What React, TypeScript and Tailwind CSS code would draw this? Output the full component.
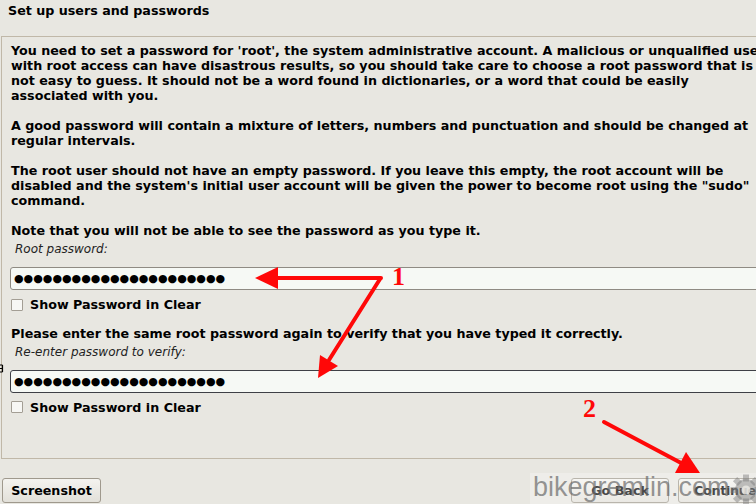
import React from "react";

const DOTS = "●".repeat(22);

function Checkbox({ label }: { label: string }) {
  return (
    <div className="flex items-center h-[15px] gap-[7px]">
      <div className="w-[12px] h-[12px] border border-[#a39e94] bg-[#f7f7f4] rounded-[1px]" />
      <span className="font-bold text-[12.7px] leading-[15px] whitespace-nowrap">{label}</span>
    </div>
  );
}

function PwInput({ focused }: { focused?: boolean }) {
  return (
    <div
      className={
        "-ml-[1px] w-[790px] h-[23px] rounded-l-[3px] bg-[#f6f9f5] flex items-center pl-[3px] border " +
        (focused ? "border-[#3e4046]" : "border-[#8f8b83]")
      }
    >
      <span className="text-[11px] leading-none text-black font-['DejaVu_Sans',sans-serif]">{DOTS}</span>
    </div>
  );
}

function Btn({ label, w }: { label: string; w: string }) {
  return (
    <div
      className={
        "h-[25px] rounded-[3px] border border-[#9f998d] bg-gradient-to-b from-[#f4f3ef] to-[#e2e0d9] flex items-center justify-center font-bold text-[12.7px] " +
        w
      }
    >
      {label}
    </div>
  );
}

export default function App() {
  return (
    <div className="w-[756px] h-[504px] overflow-hidden relative bg-[#e8e7e1] text-black font-['DejaVu_Sans','Noto_Sans',sans-serif]">
      <div className="h-[36px] pl-[8px] pt-[3px] font-bold text-[12.7px] leading-[15px] whitespace-nowrap">
        Set up users and passwords
      </div>

      <div className="ml-[1px] w-[800px] h-[423px] border border-[#c0b8a8] pl-[9px] pt-[6px]">
        <div className="font-bold text-[12.7px] leading-[15px] whitespace-nowrap">
          <p className="mb-[15px]">
            You need to set a password for 'root', the system administrative account. A malicious or unqualified user
            <br />
            with root access can have disastrous results, so you should take care to choose a root password that is
            <br />
            not easy to guess. It should not be a word found in dictionaries, or a word that could be easily
            <br />
            associated with you.
          </p>
          <p className="mb-[15px]">
            A good password will contain a mixture of letters, numbers and punctuation and should be changed at
            <br />
            regular intervals.
          </p>
          <p className="mb-[15px]">
            The root user should not have an empty password. If you leave this empty, the root account will be
            <br />
            disabled and the system's initial user account will be given the power to become root using the "sudo"
            <br />
            command.
          </p>
          <p>Note that you will not be able to see the password as you type it.</p>
        </div>

        <div className="mt-[4px] pl-[4px] italic text-[12px] leading-[15px] text-[#222]">Root password:</div>
        <div className="mt-[10px]">
          <PwInput />
        </div>
        <div className="mt-[7px]">
          <Checkbox label="Show Password in Clear" />
        </div>

        <div className="mt-[13.5px] font-bold text-[12.7px] leading-[15px] whitespace-nowrap">
          Please enter the same root password again to verify that you have typed it correctly.
        </div>
        <div className="mt-[4px] pl-[4px] italic text-[12px] leading-[15px] text-[#222]">Re-enter password to verify:</div>
        <div className="mt-[10px]">
          <PwInput focused />
        </div>
        <div className="mt-[7px]">
          <Checkbox label="Show Password in Clear" />
        </div>
      </div>

      <div className="mt-[19px] w-[776px] flex items-start">
        <div className="ml-[2px]">
          <Btn label="Screenshot" w="w-[99px]" />
        </div>
        <div className="ml-auto flex gap-[9px]">
          <Btn label="Go Back" w="w-[98px]" />
          <Btn label="Continue" w="w-[98px] !justify-start pl-[15px] tracking-[-0.3px]" />
        </div>
      </div>

      {/* stray cursor fragment at left edge */}
      <svg className="absolute left-0 top-[364px]" width="4" height="10" viewBox="0 0 4 10">
        <path d="M0 1 L2.5 1 M0 4.5 L3 4.5 M0 8 L2.5 8 M2.5 1 L2.5 8" stroke="#000" strokeWidth="1.2" fill="none" />
      </svg>

      {/* watermark */}
      <div className="absolute left-[530px] top-[473px] right-0 bottom-0 bg-[rgba(255,255,255,0.28)] pointer-events-none">
        <div className="absolute left-[3px] top-[1px] font-['Liberation_Sans',Arial,sans-serif] text-[27px] leading-[27px] text-[rgba(105,105,105,0.7)] whitespace-nowrap">
          bikegremlin.com
        </div>
        <svg className="absolute left-[199px] top-[0px]" width="34" height="34" viewBox="0 0 34 34">
          <g fill="rgba(120,120,120,0.45)">
            <circle cx="17" cy="17" r="11" />
            {[0, 45, 90, 135, 180, 225, 270, 315].map((a) => (
              <rect key={a} x="14" y="1.5" width="6" height="7" transform={`rotate(${a} 17 17)`} />
            ))}
          </g>
          <circle cx="17" cy="17" r="4.5" fill="#ecebe6" fillOpacity="0.8" />
        </svg>
      </div>

      {/* red annotations */}
      <svg className="absolute left-0 top-0 pointer-events-none" width="756" height="504" viewBox="0 0 756 504">
        <g stroke="#ff0808" strokeWidth="4" strokeLinecap="round" fill="none">
          <line x1="274" y1="278" x2="381" y2="278" />
          <line x1="380" y1="279" x2="329" y2="360" />
          <line x1="604" y1="422" x2="683" y2="464" />
        </g>
        <g fill="#ff0808">
          <polygon points="255,278 278,267 278,289" />
          <polygon points="318,378 338,366 320,355" />
          <polygon points="700,473 675,473 686,452" />
        </g>
      </svg>
      <div className="absolute left-[392px] top-[264px] font-['Liberation_Serif',serif] font-bold text-[26px] leading-[26px] text-[#ff0808]">
        1
      </div>
      <div className="absolute left-[583px] top-[396px] font-['Liberation_Serif',serif] font-bold text-[26px] leading-[26px] text-[#ff0808]">
        2
      </div>
    </div>
  );
}
